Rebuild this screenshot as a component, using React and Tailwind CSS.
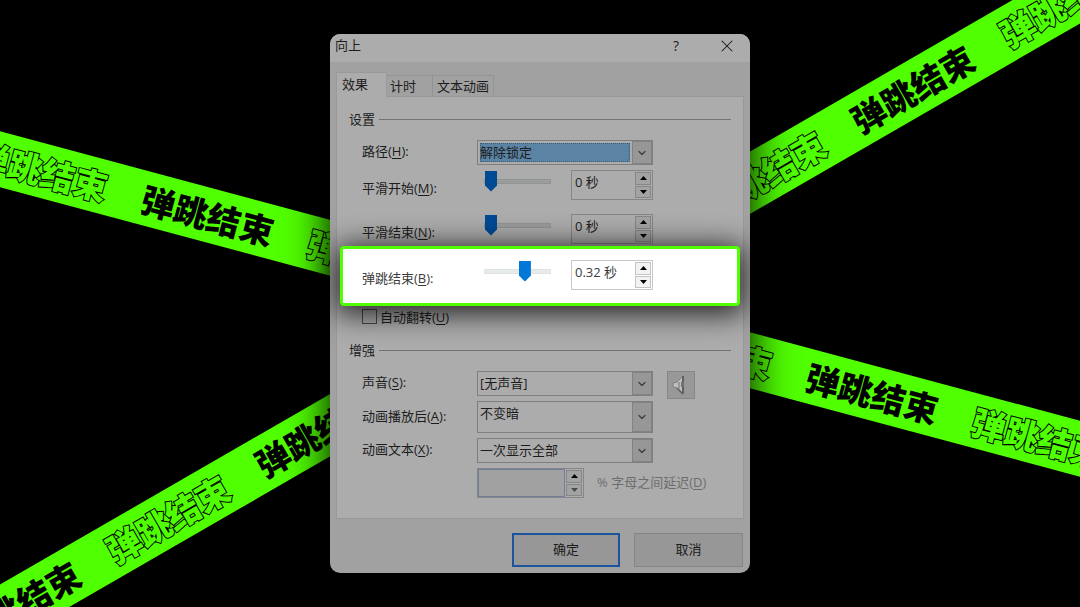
import { ChevronDown, X } from 'lucide-react';
import clsx from 'clsx';

const PHRASE = '弹跳结束';

function Tape({ className, count, firstOutlined = false }) {
    return (
        <div
            aria-hidden="true"
            className="absolute inset-0 flex items-center justify-center overflow-hidden"
        >
            <div
                className={clsx(
                    "flex h-[54px] shrink-0 items-center justify-center bg-[#50ff00] font-['Noto_Sans_CJK_SC',sans-serif] text-[34px] font-black text-black",
                    className,
                )}
            >
                {Array.from({ length: count }, (_, i) => {
                    const outlined = (i % 2 === 0) === firstOutlined;
                    return (
                        <span
                            key={i}
                            className={clsx(
                                'w-[172px] shrink-0 text-center leading-[52px] whitespace-nowrap',
                                outlined && 'text-[#50ff00] [paint-order:stroke_fill] [-webkit-text-stroke:2px_black]',
                            )}
                        >
                            {PHRASE}
                        </span>
                    );
                })}
            </div>
        </div>
    );
}

function LabelText({ text, hotkey, colon = true }) {
    return (
        <>
            {text}(<u className="underline-offset-2">{hotkey}</u>){colon && ':'}
        </>
    );
}

function Section({ children }) {
    return (
        <div className="flex h-5 items-center gap-1 pr-3 pl-3">
            <h2 className="leading-5">{children}</h2>
            <span className="h-px flex-1 bg-[#747474]" />
        </div>
    );
}

function Field({ id, text, hotkey, className, labelClassName = 'leading-[22px]', children }) {
    return (
        <div className={clsx('flex items-start pl-[25px]', className)}>
            <label htmlFor={id} className={clsx('w-[115px] shrink-0', labelClassName)}>
                {text && <LabelText text={text} hotkey={hotkey} />}
            </label>
            {children}
        </div>
    );
}

function Select({ id, value, selected = false, className = 'h-[25px]' }) {
    return (
        <div className={clsx('relative flex w-44 border border-[#7f7f7f] p-px', className)}>
            <select
                id={id}
                defaultValue={value}
                className={clsx(
                    'min-w-0 flex-1 appearance-none',
                    selected
                        ? 'my-px mr-[21px] ml-px bg-[#5b83a4] outline-1 -outline-offset-1 outline-[#3c5a75] outline-dotted'
                        : 'px-px outline-none',
                )}
            >
                <option>{value}</option>
            </select>
            <span className="pointer-events-none absolute inset-y-0 right-0 flex w-5 items-center justify-center border border-[#828282] bg-[#979797]">
                <ChevronDown className="h-3 w-3 text-[#3d3d3d]" strokeWidth={2.5} />
            </span>
        </div>
    );
}

function Arrow({ down = false }) {
    return (
        <svg viewBox="0 0 7 4" className={clsx('h-1 w-[7px] fill-current', down && 'rotate-180')}>
            <path d="M3.5 0L7 4H0z" />
        </svg>
    );
}

function Spinner({ id, value, bright = false, disabled = false, className = 'w-[82px]' }) {
    const button = clsx(
        'flex flex-1 items-center justify-center border',
        bright ? 'border-[#c4c4c4] bg-[#f3f3f3]' : 'border-[#868686] bg-[#a3a3a3]',
    );
    return (
        <div
            className={clsx(
                'flex h-[30px] border',
                bright ? 'border-[#c8c8cc]' : 'border-[#868686]',
                className,
            )}
        >
            <input
                id={id}
                type="text"
                defaultValue={value}
                disabled={disabled}
                className={clsx(
                    'h-full min-w-0 flex-1 pb-2 pl-[3px] outline-none',
                    disabled && 'border border-[#6f7f9a] bg-[#a1a1a1]',
                )}
            />
            <div className="flex w-[18px] flex-col gap-px p-px text-black">
                <button type="button" aria-label="增加" className={button}>
                    <Arrow />
                </button>
                <button
                    type="button"
                    aria-label="减少"
                    className={clsx(button, disabled && 'border-[#9a9a9a] text-[#4a4a4a]')}
                >
                    <Arrow down />
                </button>
            </div>
        </div>
    );
}

function SliderField({ id, text, hotkey, seconds, bright = false, className }) {
    return (
        <Field id={id} text={text} hotkey={hotkey} className={className} labelClassName="pt-2 leading-5">
            <input
                type="range"
                aria-label={text}
                min="0"
                max="0.5"
                step="0.01"
                defaultValue={seconds}
                className={clsx(
                    'mr-5 ml-[7px] h-[22px] w-[67px] appearance-none bg-transparent',
                    '[&::-webkit-slider-runnable-track]:h-[5px] [&::-webkit-slider-runnable-track]:border',
                    '[&::-webkit-slider-thumb]:-mt-[9px] [&::-webkit-slider-thumb]:h-[21px] [&::-webkit-slider-thumb]:w-3 [&::-webkit-slider-thumb]:appearance-none',
                    '[&::-webkit-slider-thumb]:[clip-path:polygon(0_0,100%_0,100%_72%,50%_100%,0_72%)]',
                    bright
                        ? '[&::-webkit-slider-runnable-track]:border-[#dfe3e3] [&::-webkit-slider-runnable-track]:bg-[#e7eaea] [&::-webkit-slider-thumb]:bg-[#0078d7]'
                        : '[&::-webkit-slider-runnable-track]:border-[#929494] [&::-webkit-slider-runnable-track]:bg-[#9b9d9d] [&::-webkit-slider-thumb]:bg-[#004a94]',
                )}
            />
            <Spinner id={id} value={`${seconds} 秒`} bright={bright} />
        </Field>
    );
}

function SpeakerIcon() {
    return (
        <svg viewBox="0 0 16 20" className="mr-1 h-5 w-4 shrink-0">
            <path d="M2 8L6 7L12 1V19L6 13L2 12z" fill="#bdbdbd" />
            <path d="M6 13L2 12V8L6 7L12 1" fill="none" stroke="#808080" />
            <path d="M6 13L12 19" fill="none" stroke="#5c5c5c" strokeWidth="1.5" />
            <path d="M8 7V14" stroke="#8c8c8c" strokeWidth="1.5" />
            <path d="M12 1V19" stroke="#606060" strokeWidth="2" />
            <path d="M10 7H13V12H10z" fill="#707070" />
        </svg>
    );
}

function Tabs() {
    return (
        <div role="tablist" className="flex items-end">
            <button
                type="button"
                role="tab"
                aria-selected="true"
                className="relative z-10 -mb-px h-[25px] w-[51px] border border-b-0 border-[#9a9a9a] bg-[#acacac] pb-px pl-[5px] text-left"
            >
                效果
            </button>
            <button
                type="button"
                role="tab"
                aria-selected="false"
                className="h-[21px] w-[46px] border-t border-r border-[#939393] pl-[3px] text-left leading-[18px]"
            >
                计时
            </button>
            <button
                type="button"
                role="tab"
                aria-selected="false"
                className="h-[21px] w-[61px] border-t border-r border-[#939393] pl-1 text-left leading-[18px] whitespace-nowrap"
            >
                文本动画
            </button>
        </div>
    );
}

export default function App() {
    return (
        <div className="relative flex min-h-screen items-center justify-center overflow-hidden bg-black">
            <Tape className="rotate-15" count={9} />
            <Tape className="-rotate-30" count={10} firstOutlined />

            <div
                role="dialog"
                aria-label="向上"
                className="relative w-[420px] rounded-[10px] bg-[#a1a1a1] font-['Open_Sans','Noto_Sans_CJK_SC',sans-serif] text-[13px] text-[#1c1c1c] shadow-[0_0_45px_#000]"
            >
                <header className="flex h-7 items-start rounded-t-[10px] bg-[#acacac] pr-[13px] pl-[5px]">
                    <h1 className="flex-1 leading-[22px]">向上</h1>
                    <button type="button" aria-label="帮助" className="mr-[38px] text-sm leading-6">
                        ?
                    </button>
                    <button type="button" aria-label="关闭" className="pt-[2px]">
                        <X className="h-5 w-5" strokeWidth={1.25} />
                    </button>
                </header>

                <div className="px-[6px] pt-[10px]">
                    <Tabs />
                    <div role="tabpanel" className="border border-[#989898] bg-[#acacac] pt-3 pb-5">
                        <Section>设置</Section>
                        <Field id="path" text="路径" hotkey="H" className="mt-[11px] h-[30px]">
                            <Select id="path" value="解除锁定" selected />
                        </Field>
                        <SliderField id="smooth-start" text="平滑开始" hotkey="M" seconds={0} className="h-11" />
                        <SliderField id="smooth-end" text="平滑结束" hotkey="N" seconds={0} className="h-8" />

                        <div className="relative z-10 mx-[3px] rounded border-3 border-[#50ff00] bg-white text-[#3c3c3c] shadow-[0_4px_28px_4px_rgba(0,0,0,0.8)]">
                            <SliderField
                                id="bounce-end"
                                text="弹跳结束"
                                hotkey="B"
                                seconds={0.32}
                                bright
                                className="-ml-[6px] h-[54px] pt-[11px]"
                            />
                        </div>

                        <div className="flex h-5 items-center gap-[3px] pt-px pl-[25px]">
                            <input
                                id="auto-reverse"
                                type="checkbox"
                                className="h-[15px] w-[15px] appearance-none border border-[#4a4a4a]"
                            />
                            <label htmlFor="auto-reverse" className="leading-5">
                                <LabelText text="自动翻转" hotkey="U" colon={false} />
                            </label>
                        </div>

                        <div className="pt-[14px]">
                            <Section>增强</Section>
                        </div>
                        <Field id="sound" text="声音" hotkey="S" className="mt-[11px] h-[30px]">
                            <Select id="sound" value="[无声音]" />
                            <button
                                type="button"
                                aria-label="音量"
                                className="ml-[14px] flex h-7 w-7 items-center justify-center border border-[#868686] bg-[#989898]"
                            >
                                <SpeakerIcon />
                            </button>
                        </Field>
                        <Field id="after" text="动画播放后" hotkey="A" className="h-[37px]" labelClassName="leading-[30px]">
                            <Select id="after" value="不变暗" className="h-8 [&_select]:pb-[6px]" />
                        </Field>
                        <Field id="text" text="动画文本" hotkey="X" className="h-[30px]">
                            <Select id="text" value="一次显示全部" />
                        </Field>
                        <Field className="h-[30px]">
                            <Spinner id="delay" value="" disabled className="w-[107px]" />
                            <label htmlFor="delay" className="ml-[13px] leading-7 text-[#6c6c6c]">
                                % <LabelText text="字母之间延迟" hotkey="D" colon={false} />
                            </label>
                        </Field>
                    </div>
                </div>

                <footer className="flex justify-end gap-[14px] px-[7px] pt-[14px] pb-[6px]">
                    <button type="button" className="h-[34px] w-[108px] border-2 border-[#1b549a] bg-[#979797]">
                        确定
                    </button>
                    <button type="button" className="h-[34px] w-[109px] border border-[#858585] bg-[#979797]">
                        取消
                    </button>
                </footer>
            </div>
        </div>
    );
}
